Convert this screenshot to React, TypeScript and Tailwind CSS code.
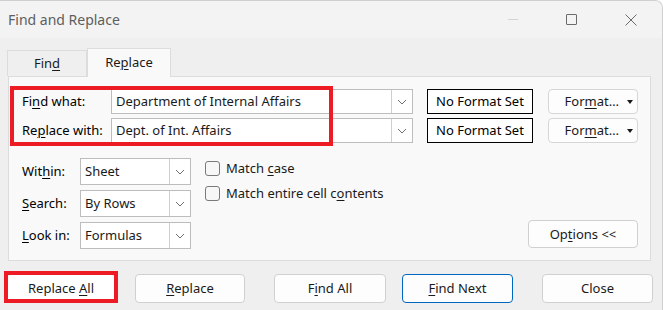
import React from "react";

const U = ({ children }: { children: React.ReactNode }) => (
  <span className="underline underline-offset-[2px] decoration-1">{children}</span>
);

function Chevron() {
  return (
    <svg width="10" height="6" viewBox="0 0 10 6" fill="none">
      <path d="M1 1l4 4 4-4" stroke="#6f6f6f" strokeWidth="1" />
    </svg>
  );
}

function Combo({ value, w, h }: { value: string; w: string; h: string }) {
  return (
    <div className={`${w} ${h} flex bg-white border border-[#bdbdbd]`}>
      <div className="flex-1 flex items-center pl-[4px] text-[#1a1a1a] whitespace-nowrap overflow-hidden">{value}</div>
      <div className="w-[21px] flex items-center justify-center border-l border-[#cfcfcf]">
        <Chevron />
      </div>
    </div>
  );
}

function Btn({ children, className = "" }: { children: React.ReactNode; className?: string }) {
  return (
    <div
      className={`h-[29px] flex items-center justify-center bg-[#fdfdfd] border border-[#d0d0d0] rounded-[4px] text-[#1a1a1a] ${className}`}
    >
      <span className="whitespace-pre">{children}</span>
    </div>
  );
}

function FormatBtn() {
  return (
    <div className="w-[90px] h-[25px] flex items-center justify-end pr-[4px] gap-[8px] bg-[#fdfdfd] border border-[#d6d6d6] rounded-[4px] text-[#1a1a1a]">
      <span>
        For<U>m</U>at…
      </span>
      <svg width="6" height="4" viewBox="0 0 6 4">
        <path d="M0 0h6L3 4z" fill="#1a1a1a" />
      </svg>
    </div>
  );
}

function Check({ children }: { children: React.ReactNode }) {
  return (
    <div className="flex items-center gap-[6px] h-[25px]">
      <div className="w-[15px] h-[15px] rounded-[3px] border border-[#7a7a7a] bg-[#f7f7f7]" />
      <span className="text-[#1a1a1a]">{children}</span>
    </div>
  );
}

export default function App() {
  return (
    <div
      className="relative w-[663px] h-[310px] overflow-hidden bg-[#efefef] border-t border-r border-[#cfcfcf] rounded-tr-[8px] text-[13px] leading-none"
      style={{ fontFamily: '"Noto Sans", "Open Sans", sans-serif' }}
    >
      {/* title bar */}
      <div className="h-[37px] flex items-center bg-[#f3f3f3] pl-[8px]">
        <span className="text-[14px] text-[#5e5e5e]">Find and Replace</span>
        <div className="ml-auto flex items-center h-full">
          <div className="w-[58px] flex justify-center">
            <div className="w-[10px] h-px bg-[#d4d4d4]" />
          </div>
          <div className="w-[58px] flex justify-center">
            <div className="w-[11px] h-[11px] border border-[#6b6b6b] rounded-[1px]" />
          </div>
          <div className="w-[62px] flex justify-center">
            <svg width="12" height="12" viewBox="0 0 12 12">
              <path d="M0.5 0.5l11 11M11.5 0.5l-11 11" stroke="#6b6b6b" strokeWidth="1" />
            </svg>
          </div>
        </div>
      </div>

      {/* tabs */}
      <div className="flex items-end pl-[7px] pt-[10px] h-[38px]">
        <div className="w-[80px] h-[26px] flex items-center justify-center border border-b-0 border-[#dcdcdc] bg-[#efefef] text-[#1a1a1a]">
          Fin<U>d</U>
        </div>
        <div className="relative z-10 w-[84px] h-[29px] -mb-px flex items-center justify-center border border-b-0 border-[#dcdcdc] bg-[#f9f9f9] text-[#1a1a1a] pb-[2px]">
          Re<U>p</U>lace
        </div>
      </div>

      {/* panel */}
      <div className="ml-[8px] w-[643px] h-[185px] border border-[#dcdcdc] bg-[#f9f9f9] pt-[12px] pl-[13px] pr-[12px]">
        <div className="flex flex-col gap-[4px]">
          <div className="flex items-center">
            <div className="w-[89px]">
              Fi<U>n</U>d what:
            </div>
            <Combo value="Department of Internal Affairs" w="w-[302px]" h="h-[25px]" />
            <div className="ml-[14px] w-[106px] h-[25px] flex items-center justify-center border border-black bg-white">
              No Format Set
            </div>
            <div className="ml-[15px]">
              <FormatBtn />
            </div>
          </div>
          <div className="flex items-center">
            <div className="w-[89px]">
              Re<U>p</U>lace with:
            </div>
            <Combo value="Dept. of Int. Affairs" w="w-[302px]" h="h-[25px]" />
            <div className="ml-[14px] w-[106px] h-[25px] flex items-center justify-center border border-black bg-white">
              No Format Set
            </div>
            <div className="ml-[15px]">
              <FormatBtn />
            </div>
          </div>
        </div>

        <div className="flex items-end mt-[15px]">
          <div className="flex flex-col gap-[5px]">
            <div className="flex items-center">
              <div className="w-[58px]">
                Wit<U>h</U>in:
              </div>
              <Combo value="Sheet" w="w-[111px]" h="h-[27px]" />
            </div>
            <div className="flex items-center">
              <div className="w-[58px]">
                <U>S</U>earch:
              </div>
              <Combo value="By Rows" w="w-[111px]" h="h-[27px]" />
            </div>
            <div className="flex items-center">
              <div className="w-[58px]">
                <U>L</U>ook in:
              </div>
              <Combo value="Formulas" w="w-[111px]" h="h-[27px]" />
            </div>
          </div>
          <div className="self-start ml-[14px] mt-[-2px] flex flex-col">
            <Check>
              Match <U>c</U>ase
            </Check>
            <Check>
              Match entire cell c<U>o</U>ntents
            </Check>
          </div>
          <Btn className="ml-auto w-[110px] !h-[28px] mb-px">
            Op<U>t</U>ions &lt;&lt;
          </Btn>
        </div>
      </div>

      {/* bottom buttons */}
      <div className="flex mt-[13px] pl-[6px]">
        <Btn className="w-[110px] !bg-white">
          Replace <U>A</U>ll
        </Btn>
        <Btn className="ml-[19px] w-[110px]">
          <U>R</U>eplace
        </Btn>
        <Btn className="ml-[29px] w-[112px]">
          F<U>i</U>nd All
        </Btn>
        <Btn className="ml-[16px] w-[111px] !border-[#0067c0]">
          <U>F</U>ind Next
        </Btn>
        <Btn className="ml-[29px] w-[111px]">Close</Btn>
      </div>

      {/* red highlight annotations */}
      <div className="absolute left-[10px] top-[85px] w-[323px] h-[60px] border-[4px] border-[#ed1c24] pointer-events-none" />
      <div className="absolute left-[4px] top-[270px] w-[114px] h-[32px] border-[4px] border-[#ed1c24] pointer-events-none" />
    </div>
  );
}
